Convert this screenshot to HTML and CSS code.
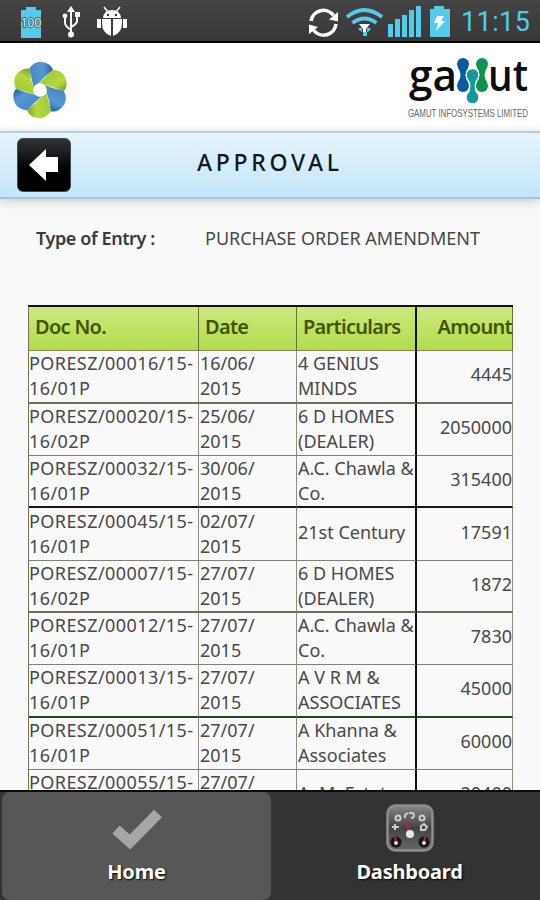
FILE: index.html
```html
<!DOCTYPE html>
<html lang="en">
<head>
    <meta charset="UTF-8">
    <meta name="viewport" content="width=device-width, initial-scale=1.0">
    <title>Approval</title>
    <link rel="stylesheet" href="styles.css">
</head>
<body>
    <div class="status-bar">
        <svg class="status-icons" width="130" height="41" viewBox="0 0 130 41">
            <path d="M26 7h10v3h5v28H21V10h5z" fill="#55cbe9"/>
            <text x="31" y="27" class="battery-level">100</text>
            <g stroke="#fff" stroke-width="2" fill="none">
                <path d="M71 11v24M65 17v6q0 3 6 7M77 16v5q0 3-6 6"/>
            </g>
            <path d="M71 6l4 6h-8zM75 12h5v5h-5z" fill="#fff"/>
            <circle cx="65" cy="16" r="2.400" fill="#fff"/>
            <circle cx="71" cy="34.500" r="3" fill="#fff"/>
            <g fill="#fff">
                <path d="M103 18q1-8 9-8t9 8z"/>
                <path d="M102 19h9v17q-9-3-9-13zM113 19h9v4q0 10-9 13zM97 19h4v9h-4zM123 19h4v9h-4z"/>
                <path d="M104 7l4 5M120 7l-4 5" stroke="#fff" stroke-width="1.500"/>
            </g>
            <circle cx="108" cy="15" r="1.200" fill="#333"/>
            <circle cx="116" cy="15" r="1.200" fill="#333"/>
        </svg>
        <div class="status-right">
            <svg width="146" height="41" viewBox="306 0 146 41">
                <g stroke="#fff" stroke-width="3.600" fill="none">
                    <path d="M311 21a12.500 12.500 0 0 1 22.500-5.500M336 24a12.500 12.500 0 0 1-22.500 6"/>
                </g>
                <path d="M338 12v9.500l-9-2zM309 34v-9.500l9 2.500z" fill="#fff"/>
                <g stroke="#55cbe9" fill="none" stroke-width="3.700">
                    <path d="M347 17q17-14 35 0M352.500 23q12-9 24 0"/>
                </g>
                <path d="M359 24h11l-4 5v3h-3v-3z" fill="#fff"/>
                <path d="M358 29q2-2 4-1v4h5v-4q2-1 4 1l-3 3h-6zM363 32h4v4h-4z" fill="#55cbe9"/>
                <path d="M388 24h5v13h-5zM395 19h5v18h-5zM402 15h5v22h-5zM409 10h5v27h-5zM416 6h5v31h-5z" fill="#55cbe9"/>
                <path d="M434 6h10v3h6v28h-20V9h4z" fill="#55cbe9"/>
                <path d="M437 16h7l-3 5h4l-9 10 2-8h-4z" fill="#fff"/>
            </svg>
            <span class="clock">11:15</span>
        </div>
    </div>

    <div class="brand">
        <svg class="flower" width="56" height="60" viewBox="-28 -30 56 60">
            <defs>
                <linearGradient id="blue" x1="0" y1=".4" x2="1" y2=".3">
                    <stop offset="0" stop-color="#4787c4"/>
                    <stop offset=".6" stop-color="#5798d6"/>
                    <stop offset="1" stop-color="#2a5f9d"/>
                </linearGradient>
                <linearGradient id="lime" x1="0" y1=".4" x2="1" y2=".3">
                    <stop offset="0" stop-color="#a0c935"/>
                    <stop offset=".6" stop-color="#b5da40"/>
                    <stop offset="1" stop-color="#7ba026"/>
                </linearGradient>
                <path id="petal" d="M-6.200-1.300Q-8-11-11-21.300Q-6-28.500 1-28.300Q11-27 13-20Q5-14-2-6Z"/>
            </defs>
            <use href="#petal" fill="url(#blue)"/>
            <use href="#petal" fill="url(#lime)" transform="rotate(60)"/>
            <use href="#petal" fill="url(#blue)" transform="rotate(120)"/>
            <use href="#petal" fill="url(#lime)" transform="rotate(180)"/>
            <use href="#petal" fill="url(#blue)" transform="rotate(240)"/>
            <use href="#petal" fill="url(#lime)" transform="rotate(300)"/>
            <circle r="6.800" fill="#fff"/>
        </svg>
        <svg class="gamut" width="126" height="74" viewBox="405 48 126 74">
            <text x="409" y="91" class="gamut-text" textLength="48" lengthAdjust="spacingAndGlyphs">ga</text>
            <text x="488" y="91" class="gamut-text" textLength="40" lengthAdjust="spacingAndGlyphs">ut</text>
            <g fill="#0b5a9d">
                <circle cx="463" cy="64" r="6"/><circle cx="463" cy="86" r="6"/>
                <path d="M457.500 67q6 8 0 16h11q-6-8 0-16z"/>
            </g>
            <g fill="#119052">
                <circle cx="482" cy="64" r="6"/><circle cx="482" cy="86" r="6"/>
                <path d="M476.500 67q6 8 0 16h11q-6-8 0-16z"/>
            </g>
            <g fill="#14999b" stroke="#fff">
                <circle cx="472.500" cy="75" r="6.300"/><circle cx="472.500" cy="97.500" r="6.300"/>
                <path d="M467.500 78q6 8 0 17h10q-6-9 0-17z" stroke="none"/>
            </g>
            <text x="408" y="117" class="gamut-sub" textLength="120" lengthAdjust="spacingAndGlyphs">GAMUT INFOSYSTEMS LIMITED</text>
        </svg>
    </div>

    <div class="title-bar">
        <div class="back">
            <svg width="32" height="34" viewBox="0 0 32 34"><path d="M1 17L18 1v8h12v15H18v9z" fill="#fff"/></svg>
        </div>
        <h1>APPROVAL</h1>
    </div>

    <div class="content">
        <div class="entry">
            <b>Type of Entry :</b>
            <span>PURCHASE ORDER AMENDMENT</span>
        </div>
        <table>
            <colgroup><col class="c-doc"><col class="c-date"><col class="c-part"><col class="c-amt"></colgroup>
            <thead>
                <tr><th>Doc No.</th><th>Date</th><th>Particulars</th><th>Amount</th></tr>
            </thead>
            <tbody>
                <tr><td>PORESZ/00016/15-<br>16/01P</td><td>16/06/<br>2015</td><td>4 GENIUS<br>MINDS</td><td>4445</td></tr>
                <tr><td>PORESZ/00020/15-<br>16/02P</td><td>25/06/<br>2015</td><td>6 D HOMES<br>(DEALER)</td><td>2050000</td></tr>
                <tr><td>PORESZ/00032/15-<br>16/01P</td><td>30/06/<br>2015</td><td>A.C. Chawla &amp;<br>Co.</td><td>315400</td></tr>
                <tr><td>PORESZ/00045/15-<br>16/01P</td><td>02/07/<br>2015</td><td class="single">21st Century</td><td>17591</td></tr>
                <tr><td>PORESZ/00007/15-<br>16/02P</td><td>27/07/<br>2015</td><td>6 D HOMES<br>(DEALER)</td><td>1872</td></tr>
                <tr><td>PORESZ/00012/15-<br>16/01P</td><td>27/07/<br>2015</td><td>A.C. Chawla &amp;<br>Co.</td><td>7830</td></tr>
                <tr><td>PORESZ/00013/15-<br>16/01P</td><td>27/07/<br>2015</td><td>A V R M &amp;<br>ASSOCIATES</td><td>45000</td></tr>
                <tr><td>PORESZ/00051/15-<br>16/01P</td><td>27/07/<br>2015</td><td>A Khanna &amp;<br>Associates</td><td>60000</td></tr>
                <tr><td>PORESZ/00055/15-<br>16/01P</td><td>27/07/<br>2015</td><td class="single">A. M. Estate</td><td>20400</td></tr>
            </tbody>
        </table>
    </div>

    <div class="tabs">
        <div class="tab active">
            <svg width="54" height="48" viewBox="0 0 54 48"><path d="M6 25.500l14 12.500L48 9.500" fill="none" stroke="#a6a6a6" stroke-width="11"/></svg>
            <span>Home</span>
        </div>
        <div class="tab">
            <svg width="48" height="48" viewBox="0 0 48 48">
                <defs>
                    <linearGradient id="dial" x1="0" y1="0" x2="0" y2="1">
                        <stop offset="0" stop-color="#858585"/>
                        <stop offset=".5" stop-color="#444"/>
                        <stop offset="1" stop-color="#666"/>
                    </linearGradient>
                </defs>
                <rect x="1.500" y="1.500" width="45" height="45" rx="8" fill="url(#dial)" stroke="#8e8e8e" stroke-width="2.500"/>
                <g fill="none" stroke="#ccc" stroke-width="2">
                    <circle cx="12" cy="14" r="2.500"/><circle cx="36" cy="14" r="2.500"/>
                    <path d="M19 14v-3l3-2M23 9h3q2 0 2 2.500t-3 2.500M6 23h7M9 20v6M35 22l3-2 3 3-2 3h-4z"/>
                </g>
                <circle cx="10" cy="38" r="5.500" fill="#161616"/><circle cx="38" cy="38" r="5.500" fill="#161616"/>
                <path d="M20 18l4 11M10 38l-1-5M38 38l1-5" stroke="#c8202f" stroke-width="2"/>
                <circle cx="24" cy="30" r="4" fill="#e6e6e6"/>
                <circle cx="10" cy="39" r="2" fill="#ddd"/><circle cx="38" cy="39" r="2" fill="#ddd"/>
            </svg>
            <span>Dashboard</span>
        </div>
    </div>
</body>
</html>
```
FILE: styles.css
```css
* { box-sizing: border-box; }
body {
    margin: 0; width: 540px; height: 900px; overflow: hidden;
    font-family: "Noto Sans", "Open Sans", sans-serif;
    background: #f9f9f9; color: #484848;
    display: flex; flex-direction: column;
}
svg { display: block; overflow: visible; }

.status-bar {
    height: 43px; flex: none;
    display: flex; justify-content: space-between;
    background: linear-gradient(#444, #383838);
    border-bottom: 2px solid #050505;
}
.status-right { display: flex; width: 234px; }
.battery-level {
    font-size: 12px; text-anchor: middle; fill: #d4f4fc;
    stroke: #47616a; stroke-width: 2px; paint-order: stroke;
}
.clock {
    color: #55cbe9; font-family: Roboto, sans-serif;
    font-size: 27px; line-height: 45px; letter-spacing: 0.4px; margin-left: 9px;
}

.brand {
    height: 88px; flex: none; background: #fff;
    display: flex; justify-content: space-between;
    padding: 5px 9px 0 12px;
}
.flower { margin-top: 12px; }
.gamut-text { font-family: "Open Sans", sans-serif; font-size: 43px; font-weight: 600; fill: #0c0c0c; }
.gamut-sub { font-family: "Liberation Sans", sans-serif; font-size: 11px; fill: #666; }

.title-bar {
    height: 68px; flex: none;
    display: flex; align-items: center;
    background: linear-gradient(#e7f4fd, #c3e6fa);
    border-top: 2px solid #b3cfdc; border-bottom: 2px solid #a9c4d0;
    box-shadow: 0 2px 10px rgba(0, 0, 0, 0.2);
    padding-left: 17px;
}
.back {
    width: 54px; height: 54px; border-radius: 6px;
    background: linear-gradient(#303336, #000 60%);
    border: 1px solid #444b50;
    display: flex; align-items: center; justify-content: center;
}
.title-bar h1 {
    margin: 0 0 6px 126px; font-size: 23px; font-weight: 500;
    letter-spacing: 3.7px; color: #10181c; line-height: 30px;
}

.content { flex: 1; min-height: 0; overflow: hidden; padding: 24px 27px 0 28px; }
.entry { display: flex; height: 82px; line-height: 30px; font-size: 18px; white-space: nowrap; }
.entry b { width: 177px; padding-left: 8px; font-weight: 600; letter-spacing: -0.4px; color: #3a3a3a; }

table {
    width: 485px; table-layout: fixed; border-spacing: 0;
    border-top: 2px solid #111; border-left: 1px solid #70745e;
}
.c-doc { width: 170px; }
.c-date { width: 98px; }
.c-part { width: 120px; }
.c-amt { width: 96px; }
th {
    height: 44px; padding: 0 0 4px 6px; text-align: left;
    font-size: 20px; font-weight: 600; letter-spacing: -0.7px; color: #3f5500;
    background: linear-gradient(#cde87f, #b4dc4c);
    border-right: 1px solid #66752f; border-bottom: 1px solid #7d8a55;
}
td {
    height: 52px; padding: 0 0 1px 1px; white-space: nowrap;
    font-size: 18px; line-height: 25px;
    border-right: 1px solid #8b8d7f; border-bottom: 1px solid #7f8272;
}
td:first-child { letter-spacing: 0.43px; padding-left: 0; }
th:nth-child(3), td:nth-child(3) { border-right: 2px solid #111; }
th:last-child, td:last-child { text-align: right; padding-left: 0; }
tr:nth-child(3n + 1) td { height: 53px; }
tr:nth-child(1) td, tr:nth-child(5) td { border-bottom: 2px solid #6c7056; }
tr:nth-child(3) td { border-bottom: 2px solid #161616; }
tr:nth-child(7) td { border-bottom: 2px solid #1d4a1d; }
tr:nth-child(3) td, tr:nth-child(5) td { padding-bottom: 0; }
tbody tr td:last-child, tbody tr td.single { padding-bottom: 4px; }

.tabs {
    height: 110px; flex: none; display: flex; gap: 8px;
    background: #333; border-top: 2px solid #0a0a0a;
}
.tab {
    flex: 1; display: flex; flex-direction: column; align-items: center;
    padding-top: 12px; color: #fff; font-size: 20px; font-weight: 700;
    text-shadow: 1px 1px 2px #000;
}
.tab span { line-height: 30px; margin-top: 5px; letter-spacing: -0.2px; }
.active {
    flex: 0 0 269px; margin-left: 2px;
    background: #575757; border-radius: 8px;
}
```
